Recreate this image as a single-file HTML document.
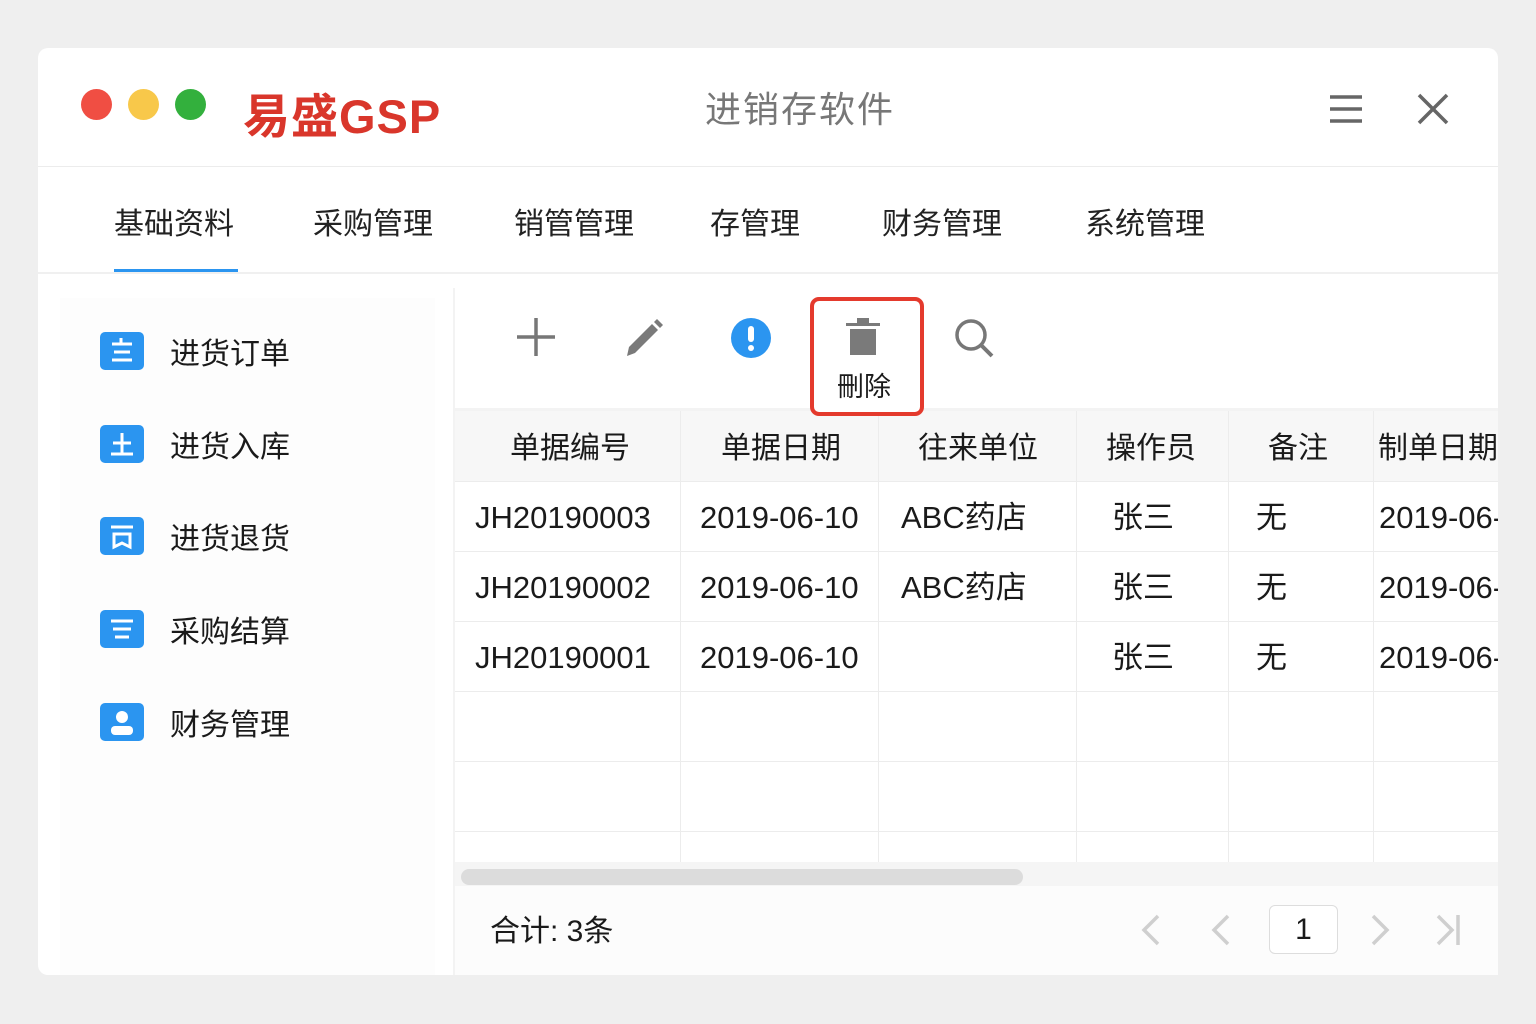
<!DOCTYPE html>
<html><head><meta charset="utf-8"><style>
*{margin:0;padding:0;box-sizing:border-box}
body{width:1536px;height:1024px;background:#efefef;font-family:"Liberation Sans","Noto Sans CJK SC",sans-serif;position:relative;overflow:hidden;color:#1a1a1a}
.a{position:absolute}
.win{left:38px;top:48px;width:1460px;height:927px;background:#fff;border-radius:10px;overflow:hidden}
.dot{width:31px;height:31px;border-radius:50%;top:89px}
.tab{top:204px;font-size:30px;color:#222;line-height:42px}
.side{font-size:30px;line-height:40px}
.ico{width:44px;height:38px;background:#2b95f0;border-radius:5px}
.th{top:411px;height:70px;background:#f7f7f7}
.cell{font-size:31px;color:#1a1a1a;line-height:36px;white-space:nowrap}
.vl{width:1px;background:#ececec;top:411px;height:451px}
.hl{height:1px;background:#ececec;left:455px;width:1043px}
</style></head><body>
<div class="a win"></div>
<div class="a dot" style="left:81px;background:#f04e43"></div>
<div class="a dot" style="left:128px;background:#f8c84a"></div>
<div class="a dot" style="left:175px;background:#33b03d"></div>
<div class="a" style="left:243px;top:87px;font-size:47px;font-weight:bold;color:#d9362b;letter-spacing:1px;line-height:60px">易盛GSP</div>
<div class="a" style="left:705px;top:86px;font-size:36px;color:#777;letter-spacing:2px;line-height:48px">进销存软件</div>
<svg class="a" style="left:1328px;top:94px" width="36" height="30"><g stroke="#666" stroke-width="3.5"><line x1="2" y1="3" x2="34" y2="3"/><line x1="2" y1="15" x2="34" y2="15"/><line x1="2" y1="27" x2="34" y2="27"/></g></svg>
<svg class="a" style="left:1416px;top:92px" width="34" height="34"><g stroke="#666" stroke-width="3.5"><line x1="3" y1="3" x2="31" y2="31"/><line x1="31" y1="3" x2="3" y2="31"/></g></svg>
<div class="a" style="left:38px;top:166px;width:1460px;height:1px;background:#ececec"></div>
<div class="a tab" style="left:114px">基础资料</div>
<div class="a tab" style="left:313px">采购管理</div>
<div class="a tab" style="left:514px">销管管理</div>
<div class="a tab" style="left:710px">存管理</div>
<div class="a tab" style="left:882px">财务管理</div>
<div class="a tab" style="left:1085px">系统管理</div>
<div class="a" style="left:114px;top:269px;width:124px;height:4px;background:#2b95f0"></div>
<div class="a" style="left:38px;top:272px;width:1460px;height:2px;background:#f0f0f0"></div>
<div class="a" style="left:60px;top:298px;width:375px;height:677px;background:#fdfdfd"></div>
<div class="a" style="left:453px;top:288px;width:2px;height:687px;background:#f3f3f3"></div>
<!-- sidebar -->
<div class="a ico" style="left:100px;top:332px"><svg width="44" height="38"><g stroke="#fff" stroke-width="3"><line x1="12" y1="12" x2="32" y2="12"/><line x1="14" y1="20" x2="30" y2="20"/><line x1="12" y1="28" x2="32" y2="28"/><line x1="21" y1="6" x2="21" y2="13"/></g></svg></div>
<div class="a side" style="left:170px;top:335px">进货订单</div>
<div class="a ico" style="left:100px;top:425px"><svg width="44" height="38"><g stroke="#fff" stroke-width="3"><line x1="13" y1="18" x2="31" y2="18"/><line x1="22" y1="8" x2="22" y2="28"/><line x1="11" y1="29" x2="33" y2="29"/></g></svg></div>
<div class="a side" style="left:170px;top:428px">进货入库</div>
<div class="a ico" style="left:100px;top:517px"><svg width="44" height="38"><g stroke="#fff" stroke-width="3" fill="none"><line x1="11" y1="10" x2="33" y2="10"/><path d="M14 30V17h16v13l-8-4z"/></g></svg></div>
<div class="a side" style="left:170px;top:520px">进货退货</div>
<div class="a ico" style="left:100px;top:610px"><svg width="44" height="38"><g stroke="#fff" stroke-width="3"><line x1="11" y1="11" x2="33" y2="11"/><line x1="13" y1="19" x2="31" y2="19"/><line x1="15" y1="27" x2="29" y2="27"/></g></svg></div>
<div class="a side" style="left:170px;top:613px">采购结算</div>
<div class="a ico" style="left:100px;top:703px"><svg width="44" height="38"><g fill="#fff"><circle cx="22" cy="14" r="6"/><rect x="11" y="23" width="22" height="9" rx="4"/></g></svg></div>
<div class="a side" style="left:170px;top:706px">财务管理</div>
<!-- toolbar -->
<svg class="a" style="left:515px;top:317px" width="42" height="42"><g stroke="#777" stroke-width="3.5"><line x1="2" y1="20" x2="40" y2="20"/><line x1="21" y1="1" x2="21" y2="39"/></g></svg>
<svg class="a" style="left:624px;top:318px" width="40" height="40"><path d="M3 38l2-9L28 6l6 6L11 35z" fill="#7a7a7a"/><path d="M30 4l3-3 6 6-3 3z" fill="#7a7a7a"/></svg>
<div class="a" style="left:731px;top:318px;width:40px;height:40px;border-radius:50%;background:#2b95f0"></div>
<div class="a" style="left:748px;top:326px;width:6px;height:16px;background:#fff;border-radius:3px"></div>
<div class="a" style="left:748px;top:345px;width:6px;height:6px;background:#fff;border-radius:3px"></div>
<div class="a" style="left:455px;top:408px;width:1043px;height:3px;background:#f3f3f3"></div>
<!-- table -->
<div class="a th" style="left:455px;width:1043px"></div>
<div class="a vl" style="left:680px"></div><div class="a vl" style="left:878px"></div><div class="a vl" style="left:1076px"></div><div class="a vl" style="left:1228px"></div><div class="a vl" style="left:1373px"></div>
<div class="a hl" style="top:481px"></div><div class="a hl" style="top:551px"></div><div class="a hl" style="top:621px"></div><div class="a hl" style="top:691px"></div><div class="a hl" style="top:761px"></div><div class="a hl" style="top:831px"></div>
<div class="a cell" style="left:510px;top:431px;font-size:30px">单据编号</div>
<div class="a cell" style="left:721px;top:431px;font-size:30px">单据日期</div>
<div class="a cell" style="left:918px;top:431px;font-size:30px">往来单位</div>
<div class="a cell" style="left:1106px;top:431px;font-size:30px">操作员</div>
<div class="a cell" style="left:1268px;top:431px;font-size:30px">备注</div>
<div class="a cell" style="left:1378px;top:431px;font-size:30px">制单日期</div>
<div class="a cell" style="left:475px;top:500px">JH20190003</div><div class="a cell" style="left:700px;top:500px">2019-06-10</div><div class="a cell" style="left:901px;top:500px">ABC药店</div><div class="a cell" style="left:1112px;top:500px">张三</div><div class="a cell" style="left:1256px;top:500px">无</div><div class="a cell" style="left:1379px;top:500px;width:119px;overflow:hidden">2019-06-10</div>
<div class="a cell" style="left:475px;top:570px">JH20190002</div><div class="a cell" style="left:700px;top:570px">2019-06-10</div><div class="a cell" style="left:901px;top:570px">ABC药店</div><div class="a cell" style="left:1112px;top:570px">张三</div><div class="a cell" style="left:1256px;top:570px">无</div><div class="a cell" style="left:1379px;top:570px;width:119px;overflow:hidden">2019-06-10</div>
<div class="a cell" style="left:475px;top:640px">JH20190001</div><div class="a cell" style="left:700px;top:640px">2019-06-10</div><div class="a cell" style="left:1112px;top:640px">张三</div><div class="a cell" style="left:1256px;top:640px">无</div><div class="a cell" style="left:1379px;top:640px;width:119px;overflow:hidden">2019-06-10</div>
<!-- delete button on top -->
<div class="a" style="left:810px;top:297px;width:114px;height:119px;border:4px solid #e43a2d;border-radius:9px;background:#fff"></div>
<svg class="a" style="left:846px;top:318px" width="36" height="40"><rect x="0" y="5" width="34" height="3" fill="#7a7a7a"/><rect x="11" y="0" width="12" height="5" fill="#7a7a7a"/><rect x="4" y="11" width="26" height="26" fill="#7a7a7a"/></svg>
<div class="a" style="left:837px;top:369px;font-size:27px;line-height:36px">刪除</div>
<svg class="a" style="left:954px;top:318px" width="42" height="42"><circle cx="17" cy="17" r="14" stroke="#777" stroke-width="3.5" fill="none"/><line x1="27" y1="27" x2="38" y2="38" stroke="#777" stroke-width="4"/></svg>
<div class="a" style="left:455px;top:862px;width:1043px;height:24px;background:#f5f5f5"></div>
<div class="a" style="left:461px;top:869px;width:562px;height:16px;border-radius:8px;background:#dcdcdc"></div>
<div class="a" style="left:455px;top:886px;width:1043px;height:89px;background:#fcfcfc"></div>
<div class="a" style="left:490px;top:913px;font-size:30px;line-height:38px">合计: 3条</div>
<svg class="a" style="left:1138px;top:912px" width="340" height="36"><g stroke="#cfcfcf" stroke-width="3.5" fill="none"><path d="M20 4L6 18l14 14"/><path d="M90 4L76 18l14 14"/><path d="M235 4l14 14-14 14"/><path d="M300 4l14 14-14 14"/><line x1="320" y1="3" x2="320" y2="33"/></g></svg>
<div class="a" style="left:1269px;top:905px;width:69px;height:49px;border:1px solid #ddd;border-radius:6px;background:#fff;font-size:30px;text-align:center;line-height:47px">1</div>
</body></html>
